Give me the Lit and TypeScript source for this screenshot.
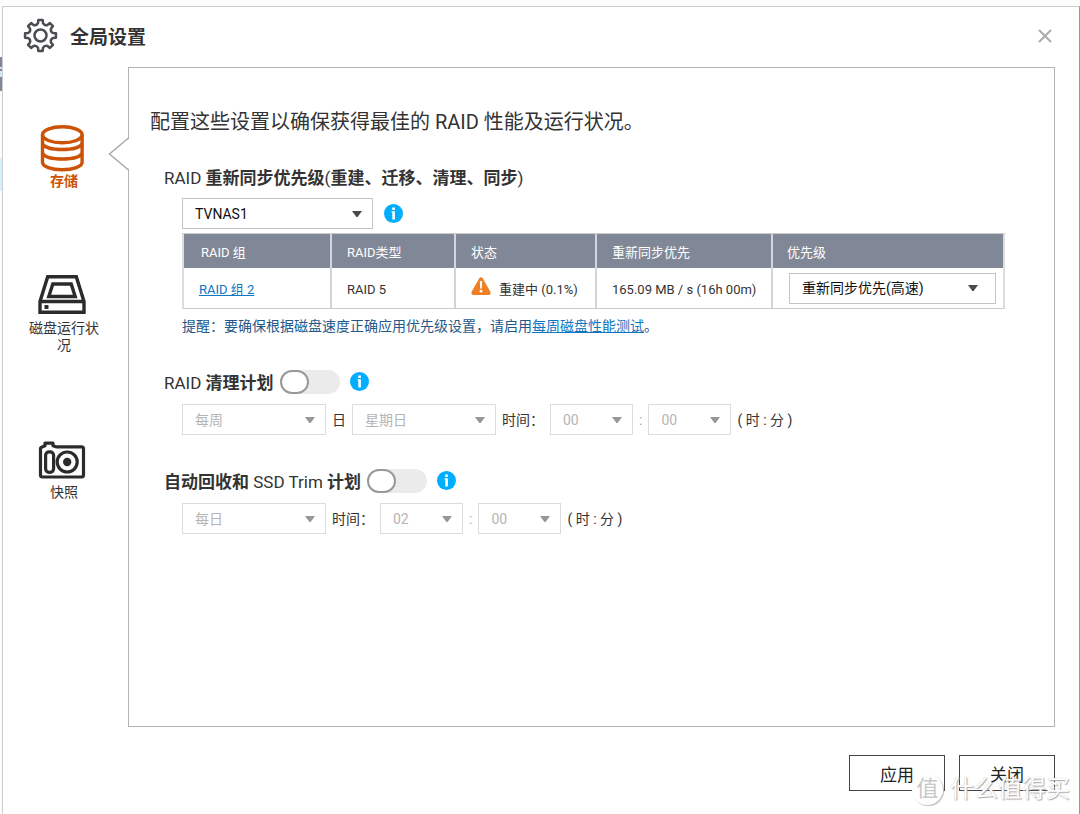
import { LitElement, html, css, svg } from "lit";
import { customElement, property, state } from "lit/decorators.js";
import { classMap } from "lit/directives/class-map.js";

const fontStack = css`Roboto, "Noto Sans CJK SC", sans-serif`;

@customElement("ui-select")
class UiSelect extends LitElement {
  @property() label = "";
  @property({ type: Array }) options: string[] = [];
  @property({ type: Boolean, reflect: true }) disabled = false;
  @property({ type: Boolean, reflect: true }) roomy = false;

  static styles = css`
    :host { display: grid; height: 31px; box-sizing: border-box; }
    .field, .arrow { grid-area: 1 / 1; }
    .field {
      appearance: none;
      box-sizing: border-box;
      width: 100%;
      height: 31px;
      margin: 0;
      padding: 0 32px 0 12px;
      border: 1px solid #c4c4c4;
      border-radius: 0;
      background: #fff;
      color: #111;
      opacity: 1;
      font: 14px ${fontStack};
    }
    .field:disabled { color: #b5b5b5; border-color: #dcdcdc; }
    .arrow {
      align-self: center;
      justify-self: end;
      margin-right: 11px;
      fill: #4a4a4a;
      pointer-events: none;
    }
    :host([roomy]) .arrow { margin-right: 18px; }
    :host([disabled]) .arrow { fill: #979797; }
  `;

  render() {
    return html`
      <select class="field" aria-label=${this.label} ?disabled=${this.disabled}>
        ${this.options.map((o) => html`<option>${o}</option>`)}
      </select>
      <svg class="arrow" width="10" height="6" viewBox="0 0 10 6"><path d="M0 0h10L5.600 6h-1.200z" /></svg>
    `;
  }
}

@customElement("info-button")
class InfoButton extends LitElement {
  static styles = css`
    :host { display: flex; }
    .info { display: flex; margin: 0; padding: 0; border: 0; background: none; cursor: pointer; }
  `;
  render() {
    return html`
      <button class="info" aria-label="信息">
        <svg width="20" height="20" viewBox="0 0 20 20">
          <circle cx="9.500" cy="9.500" r="9.500" fill="#00aeff" />
          <path d="M8.200 3.600h2.700v2.400H8.200zM7.500 7.300h3.400v8.200H8.300V8.600h-.8z" fill="#fff" />
        </svg>
      </button>
    `;
  }
}

const storageIcon = svg`
  <g fill="none" stroke="#cc5206" stroke-width="3.400">
    <ellipse cx="24.300" cy="9.800" rx="19.800" ry="8" />
    <path d="M4.500 9.800v27.500c0 4.200 8.800 7.400 19.800 7.400s19.800-3.200 19.800-7.400V9.800" />
    <path d="M4.500 19c2.500 3.800 10 5.500 19.800 5.500s17.300-1.700 19.800-5.500M4.500 28.500c2.500 3.800 10 5.500 19.800 5.500s17.300-1.700 19.800-5.500" />
  </g>`;

const diskIcon = svg`
  <g fill="none" stroke="#2b2b2b" stroke-width="3.400">
    <path d="M2 29.500 9.700 4.700h28.600L46 29.500V40.300H2zM2 29.500h44" />
    <path d="M14.800 12h18.400l4 12.500H10.800z" />
  </g>
  <rect x="6.500" y="33" width="4" height="4" fill="#2b2b2b" />`;

const cameraIcon = svg`
  <g fill="none" stroke="#2b2b2b" stroke-width="3.200" stroke-linejoin="round">
    <path d="M4 11 7 9.800V7.200h8V9.800l3 1H43.500a2 2 0 0 1 2 2V39a2 2 0 0 1-2 2H4.500a2 2 0 0 1-2-2V13a2 2 0 0 1 1.500-2z" />
    <rect x="7.600" y="15.800" width="8" height="20.500" rx="3.500" />
    <circle cx="29.200" cy="26" r="10" />
  </g>
  <circle cx="29.200" cy="26" r="4.200" fill="#2b2b2b" />`;

const navItems = [
  { id: "storage", label: "存储", icon: storageIcon },
  { id: "disk", label: "磁盘运行状况", icon: diskIcon },
  { id: "snapshot", label: "快照", icon: cameraIcon },
];

/** Closed outline of an eight-toothed cog with rounded gaps between the teeth. */
function cogPath(c: number, valley: number, outer: number): string {
  const at = (r: number, a: number) => `${(c + r * Math.sin(a)).toFixed(2)} ${(c - r * Math.cos(a)).toFixed(2)}`;
  let d = "";
  for (let i = 0; i < 8; i++) {
    const a = (i * Math.PI) / 4;
    const mid = a + Math.PI / 8;
    d += `${i ? "L" : "M"}${at(outer, a - 0.14)}L${at(outer, a + 0.14)}L${at(valley + 1.4, a + 0.2)}`;
    d += `Q${at(valley - 0.8, mid)} ${at(valley + 1.4, a + Math.PI / 4 - 0.2)}`;
  }
  return `${d}z`;
}

@customElement("app-root")
class AppRoot extends LitElement {
  @state() private active = "storage";

  static styles = css`
    :host {
      display: flex;
      flex-direction: column;
      box-sizing: border-box;
      min-height: 100vh;
      padding: 6px 0 0 2px;
      background:
        linear-gradient(
          #fdfdfd 57px, #808797 57px 67px, #dde0e6 67px 69px, #808797 69px 71px, #c9ecf8 71px 77px,
          #808797 77px 91px, #fdfdfd 91px 158px, #d5f2fb 158px 191px, #fdfdfd 191px
        ) 0 0 / 2px 100% no-repeat,
        #fdfdfd;
      color: #333;
      font: 14px/20px ${fontStack};
    }
    .dialog {
      position: relative;
      flex: 1;
      display: flex;
      flex-direction: column;
      border: 1px solid #ccc;
      border-right-color: #999;
      border-bottom: 0;
      background: #fff;
    }
    .header { display: flex; align-items: center; height: 60px; box-sizing: border-box; padding: 0 24px 2px 20px; }
    .title { flex: 1; margin: 0 0 0 11px; padding-top: 4px; font-size: 19px; line-height: 28px; font-weight: 700; }
    .close { display: flex; margin: 0; padding: 3px; border: 0; background: none; cursor: pointer; }
    .body { flex: 1; display: flex; }
    .nav { width: 122px; display: flex; flex-direction: column; align-items: center; gap: 82px; padding: 58px 3px 0 0; }
    .tab {
      width: 78px;
      display: flex;
      flex-direction: column;
      align-items: center;
      margin: 0;
      padding: 0;
      border: 0;
      background: none;
      color: #333;
      font: 14px/17px ${fontStack};
      cursor: pointer;
    }
    .tab.active { color: #cc5206; font-weight: 700; }
    .panel {
      position: relative;
      flex: 1;
      min-width: 0;
      margin-right: 24px;
      border: 1px solid #b3b3b3;
      padding: 40px 49px 24px 21px;
      box-sizing: border-box;
    }
    .pointer { position: absolute; left: -21px; top: 69px; }
    .intro { margin: 0 0 30px; font-size: 20px; line-height: 28px; }
    .section { margin: 0 0 34px 14px; }
    .heading { display: flex; align-items: center; gap: 10px; height: 24px; }
    .heading-text { margin: 0; font-size: 17px; line-height: 24px; font-weight: 700; }
    .switchable .heading-text { padding-top: 2px; }
    .latin { font-weight: 400; }
    .content { padding-left: 18px; }
    .row { display: flex; align-items: center; }
    .picker { margin-top: 8px; gap: 11px; }
    .schedule { margin-top: 10px; gap: 6px; }
    .w-volume { width: 191px; }
    .w-day { width: 144px; }
    .w-time { width: 83px; }
    .colon { color: #aaa; }
    .toggle {
      appearance: none;
      width: 60px;
      height: 24px;
      margin: 0 0 0 -4px;
      border-radius: 12px;
      background: #ebebeb;
      cursor: pointer;
    }
    .toggle::before {
      content: "";
      display: block;
      box-sizing: border-box;
      width: 29px;
      height: 24px;
      border: 2px solid #999;
      border-radius: 12px;
      background: #fff;
    }
    .toggle:checked { background: #00aeff; }
    .toggle:checked::before { margin-left: auto; }
    .table {
      width: 100%;
      margin: 4px 0 7px;
      border: 1px solid #ccc;
      border-left: 2px solid #ddd;
      border-right: 2px solid #ddd;
      border-spacing: 0;
      table-layout: fixed;
      font-size: 13px;
      text-align: left;
    }
    .c-group { width: 148px; }
    .c-type { width: 124px; }
    .c-state { width: 141px; }
    .c-speed { width: 176px; }
    .th {
      box-sizing: border-box;
      height: 34px;
      padding: 3px 0 0 15px;
      border-right: 2px solid #d4d6db;
      background: #808797;
      color: #fff;
      font-weight: 400;
    }
    .th:first-child { padding-left: 17px; }
    .td {
      box-sizing: border-box;
      height: 40px;
      padding: 3px 0 0 15px;
      border-right: 2px solid #d4d4d4;
      white-space: nowrap;
    }
    .th:last-child, .td:last-child { border-right: 0; }
    .th:last-child { padding-left: 14px; }
    .td:last-child { padding: 0 7px 0 16px; }
    .status { display: flex; align-items: center; gap: 8px; }
    .warn { margin-bottom: 8px; }
    .link { color: #0f76c2; text-decoration: underline; }
    .note { margin: 0; color: #23598a; }
    .footer { display: flex; justify-content: flex-end; gap: 14px; padding: 28px 24px 23px; }
    .action {
      width: 96px;
      height: 36px;
      margin: 0;
      padding: 0;
      border: 1px solid #444;
      background: #fff;
      color: #222;
      font: 17px ${fontStack};
      cursor: pointer;
    }
    .watermark {
      position: absolute;
      right: 9px;
      bottom: 9px;
      display: flex;
      align-items: center;
      gap: 7px;
      color: #fff;
      font-size: 24px;
      line-height: 32px;
      text-shadow: 1px 1px 1px #aaa, 0 0 1px #bbb;
      pointer-events: none;
    }
    .seal {
      width: 31px;
      height: 31px;
      border-radius: 50%;
      background: #fff;
      box-shadow: 1px 1px 1px #bbb;
      color: #c8c8c8;
      font-size: 22px;
      line-height: 30px;
      text-align: center;
      text-shadow: none;
    }
  `;

  private tabs() {
    return navItems.map(
      (item) => html`
        <button class=${classMap({ tab: true, active: item.id === this.active })} @click=${() => (this.active = item.id)}>
          <svg width="52" height="48" viewBox="0 0 52 48">${item.icon}</svg>
          <span>${item.label}</span>
        </button>
      `
    );
  }

  private time(hour: string, minute: string) {
    return html`
      <span>时间：</span>
      <ui-select class="w-time" label="时" disabled .options=${[hour]}></ui-select>
      <span class="colon">:</span>
      <ui-select class="w-time" label="分" disabled .options=${[minute]}></ui-select>
      <span>( 时 : 分 )</span>
    `;
  }

  render() {
    return html`
      <div class="dialog">
        <header class="header">
          <svg width="36" height="36" viewBox="0 0 36 36" fill="none" stroke="#4a4d52" stroke-width="2.500" stroke-linejoin="round">
            <path d=${cogPath(17.5, 11.2, 15.6)} />
            <circle cx="17.500" cy="17.500" r="6" />
          </svg>
          <h1 class="title">全局设置</h1>
          <button class="close" aria-label="关闭">
            <svg width="14" height="14" viewBox="0 0 14 14" stroke="#aaa" stroke-width="2"><path d="M1 1l12 12M13 1L1 13" /></svg>
          </button>
        </header>
        <div class="body">
          <nav class="nav">${this.tabs()}</nav>
          <main class="panel">
            <svg class="pointer" width="22" height="34" viewBox="0 0 22 34">
              <path d="M22 1 2 17 22 33z" fill="#fff" />
              <path d="M20.500 1 1.500 17 20.500 33" fill="none" stroke="#aaa" stroke-width="1.500" />
            </svg>
            <p class="intro">配置这些设置以确保获得最佳的 RAID 性能及运行状况。</p>

            <section class="section">
              <div class="heading">
                <h2 class="heading-text"><span class="latin">RAID</span> 重新同步优先级<span class="latin">(</span>重建、迁移、清理、同步<span class="latin">)</span></h2>
              </div>
              <div class="content">
                <div class="row picker">
                  <ui-select class="w-volume" label="NAS" .options=${["TVNAS1"]}></ui-select>
                  <info-button></info-button>
                </div>
                <table class="table">
                  <colgroup>
                    <col class="c-group" /><col class="c-type" /><col class="c-state" /><col class="c-speed" /><col />
                  </colgroup>
                  <thead>
                    <tr>
                      ${["RAID 组", "RAID类型", "状态", "重新同步优先", "优先级"].map((t) => html`<th class="th" scope="col">${t}</th>`)}
                    </tr>
                  </thead>
                  <tbody>
                    <tr>
                      <td class="td"><a class="link" href="#group">RAID 组 2</a></td>
                      <td class="td">RAID 5</td>
                      <td class="td">
                        <span class="status">
                          <svg class="warn" width="20" height="18" viewBox="0 0 20 18">
                            <path d="M8.300 1.200Q10-.6 11.700 1.200L19.500 15Q20 18 17.500 18H2.500Q0 18 .5 15z" fill="#f07f23" />
                            <path d="M8.800 4h2.400l-.4 7.500H9.200z" fill="#fff" /><circle cx="10" cy="14.200" r="1.400" fill="#fff" />
                          </svg>
                          重建中 (0.1%)
                        </span>
                      </td>
                      <td class="td">165.09 MB / s (16h 00m)</td>
                      <td class="td"><ui-select label="优先级" roomy .options=${["重新同步优先(高速)"]}></ui-select></td>
                    </tr>
                  </tbody>
                </table>
                <p class="note">提醒：要确保根据磁盘速度正确应用优先级设置，请启用<a class="link" href="#test">每周磁盘性能测试</a>。</p>
              </div>
            </section>

            <section class="section">
              <div class="heading switchable">
                <h2 class="heading-text"><label for="scrub"><span class="latin">RAID</span> 清理计划</label></h2>
                <input class="toggle" id="scrub" type="checkbox" role="switch" />
                <info-button></info-button>
              </div>
              <div class="content row schedule">
                <ui-select class="w-day" label="频率" disabled .options=${["每周"]}></ui-select>
                <span>日</span>
                <ui-select class="w-day" label="日" disabled .options=${["星期日"]}></ui-select>
                ${this.time("00", "00")}
              </div>
            </section>

            <section class="section">
              <div class="heading switchable">
                <h2 class="heading-text"><label for="trim">自动回收和 <span class="latin">SSD Trim</span> 计划</label></h2>
                <input class="toggle" id="trim" type="checkbox" role="switch" />
                <info-button></info-button>
              </div>
              <div class="content row schedule">
                <ui-select class="w-day" label="频率" disabled .options=${["每日"]}></ui-select>
                ${this.time("02", "00")}
              </div>
            </section>
          </main>
        </div>
        <footer class="footer">
          <button class="action">应用</button>
          <button class="action">关闭</button>
        </footer>
        <div class="watermark"><span class="seal">值</span><span>什么值得买</span></div>
      </div>
    `;
  }
}
